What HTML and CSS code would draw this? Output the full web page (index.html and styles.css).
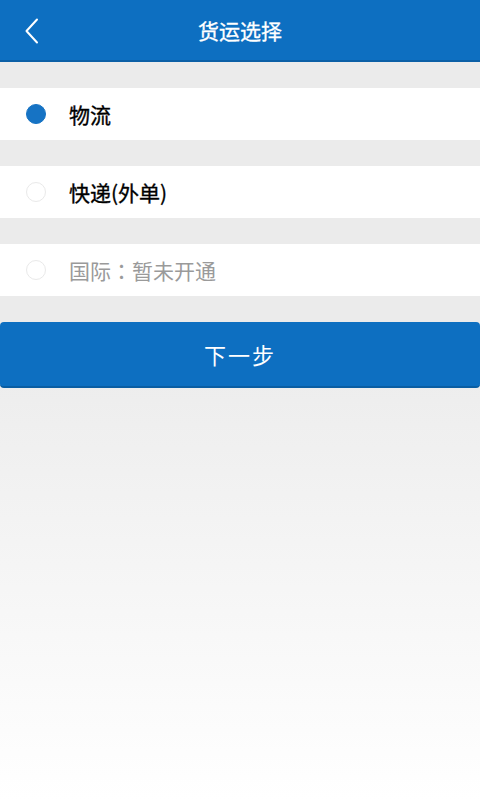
FILE: index.html
```html
<!DOCTYPE html>
<html lang="zh-CN">
<head>
<meta charset="utf-8">
<link rel="stylesheet" href="styles.css">
</head>
<body>
<div class="app">
  <header class="topbar">
    <span class="back">
      <svg width="16" height="26" viewBox="0 0 16 26"><path d="M13 1.5 L2.5 13 L13 24.5" fill="none" stroke="#ffffff" stroke-width="2" stroke-linecap="round" stroke-linejoin="round"/></svg>
    </span>
    <h1 class="title">货运选择</h1>
  </header>
  <div class="list">
    <div class="row">
      <span class="radio checked"></span>
      <span class="label">物流</span>
    </div>
    <div class="row">
      <span class="radio"></span>
      <span class="label">快递(外单)</span>
    </div>
    <div class="row">
      <span class="radio"></span>
      <span class="label disabled">国际<span class="colon" lang="zh-TW">：</span>暂未开通</span>
    </div>
  </div>
  <div class="actions">
    <button class="next">下一步</button>
  </div>
</div>
</body>
</html>
```
FILE: styles.css
```css
html, body {
  margin: 0;
  padding: 0;
}
body {
  width: 480px;
  height: 800px;
  font-family: "Noto Sans CJK SC", "Noto Sans", sans-serif;
  background: linear-gradient(to bottom, #ebebeb 0px, #ebebeb 330px, #ffffff 800px);
  overflow: hidden;
}
.app {
  display: flex;
  flex-direction: column;
}
.topbar {
  height: 60px;
  background: #0d6fc1;
  border-bottom: 2px solid #0b5fa6;
  display: flex;
  align-items: center;
  justify-content: center;
  position: relative;
}
.back {
  position: absolute;
  left: 24px;
  top: 18px;
  display: flex;
}
.title {
  margin: 0;
  color: #ffffff;
  font-size: 21px;
  font-weight: 400;
  line-height: 1;
  -webkit-text-stroke: 0.3px #ffffff;
}
.list {
  display: flex;
  flex-direction: column;
  gap: 26px;
  padding-top: 26px;
}
.row {
  height: 52px;
  background: #ffffff;
  display: flex;
  align-items: center;
  padding-left: 26px;
}
.radio {
  width: 18px;
  height: 18px;
  border-radius: 50%;
  border: 1px solid #e9e9e9;
  box-sizing: content-box;
  flex: none;
}
.radio.checked {
  border-color: #1673c4;
  background: #1673c4;
}
.label {
  margin-left: 23px;
  font-size: 21px;
  font-weight: 400;
  color: #000000;
  line-height: 1;
  -webkit-text-stroke: 0.35px #000000;
}
.label.disabled {
  color: #9a9a9a;
  -webkit-text-stroke: 0;
}
.colon {
  font-family: "Noto Sans CJK TC", "Noto Sans CJK SC", sans-serif;
}
.actions {
  padding-top: 26px;
}
.next {
  display: block;
  width: 100%;
  height: 66px;
  border: none;
  border-bottom: 2px solid #0a5ea3;
  border-radius: 4px;
  background: #0d6fc1;
  color: #ffffff;
  font-family: "Noto Sans CJK SC", "Noto Sans", sans-serif;
  font-size: 22px;
  letter-spacing: 2px;
  padding: 0;
}
```
